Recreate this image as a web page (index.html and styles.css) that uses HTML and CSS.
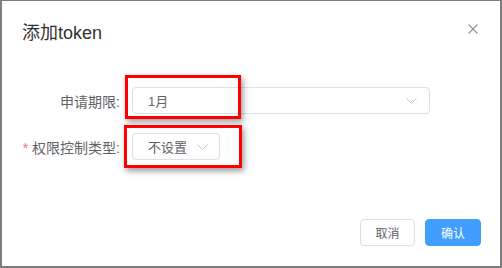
FILE: index.html
```html
<!DOCTYPE html>
<html lang="zh-CN">
<head>
<meta charset="utf-8">
<link rel="stylesheet" href="styles.css">
</head>
<body>
<div class="dialog">
  <div class="header">
    <span class="title">添加token</span>
    <button class="close" aria-label="close">
      <svg width="10" height="10" viewBox="0 0 10 10"><path d="M0.5 0.5L9.5 9.5M9.5 0.5L0.5 9.5" stroke="#909399" stroke-width="1.1" fill="none"/></svg>
    </button>
  </div>
  <div class="body">
    <div class="row">
      <label class="label">申请期限:</label>
      <div class="select wide">
        <span class="value">1月</span>
        <svg class="arrow" width="11" height="6" viewBox="0 0 11 6"><polyline points="0.5,0.5 5.5,5.5 10.5,0.5" stroke="#c0c4cc" stroke-width="1" fill="none"/></svg>
      </div>
    </div>
    <div class="row">
      <label class="label"><span class="req">*</span> 权限控制类型:</label>
      <div class="select narrow">
        <span class="value">不设置</span>
        <svg class="arrow" width="11" height="6" viewBox="0 0 11 6"><polyline points="0.5,0.5 5.5,5.5 10.5,0.5" stroke="#c0c4cc" stroke-width="1" fill="none"/></svg>
      </div>
    </div>
  </div>
  <div class="footer">
    <button class="btn">取消</button>
    <button class="btn primary">确认</button>
  </div>
</div>
<div class="mark mark1"></div>
<div class="mark mark2"></div>
</body>
</html>
```
FILE: styles.css
```css
html, body {
  margin: 0;
  padding: 0;
}
body {
  width: 502px;
  height: 268px;
  background: #7d7d7d;
  overflow: hidden;
  position: relative;
  font-family: "Helvetica Neue", Helvetica, "Liberation Sans", "Noto Sans CJK SC", sans-serif;
}
.dialog {
  margin: 1px 2px 2px 2px;
  height: 265px;
  background: #fff;
  display: flex;
  flex-direction: column;
  box-sizing: border-box;
}
.header {
  padding: 20px 20px 10px 20px;
  display: flex;
  align-items: center;
  justify-content: space-between;
}
.title {
  font-size: 18px;
  line-height: 24px;
  color: #303133;
}
.close {
  border: 0;
  background: none;
  padding: 0;
  margin: 0 2px 0 0;
  width: 10px;
  height: 10px;
  display: flex;
  margin-top: -8px;
}
.body {
  padding: 32px 20px 0 20px;
  display: flex;
  flex-direction: column;
  gap: 19px;
}
.row {
  display: flex;
  align-items: center;
  height: 27px;
}
.label {
  width: 110px;
  box-sizing: border-box;
  padding-right: 12px;
  text-align: right;
  font-size: 14px;
  color: #606266;
}
.req {
  color: #f56c6c;
}
.select {
  height: 27px;
  box-sizing: border-box;
  border: 1px solid #dcdfe6;
  border-radius: 4px;
  display: flex;
  align-items: center;
  justify-content: space-between;
  padding: 0 11px 0 15px;
}
.select.wide {
  width: 298px;
  padding-right: 12px;
}
.select.narrow {
  width: 88px;
}
.value {
  font-size: 13px;
  color: #606266;
}
.footer {
  margin-top: auto;
  padding: 0 19px 20px 20px;
  display: flex;
  justify-content: flex-end;
  gap: 10px;
}
.btn {
  height: 27px;
  width: 55px;
  border: 1px solid #dcdfe6;
  border-radius: 4px;
  background: #fff;
  color: #606266;
  font-size: 12px;
  font-family: inherit;
  padding: 0;
}
.btn.primary {
  width: 56px;
  background: #409eff;
  border-color: #409eff;
  color: #fff;
}
.mark {
  position: absolute;
  box-sizing: border-box;
  border: 3px solid #ff0000;
  box-shadow: 2px 3px 6px rgba(0, 0, 0, 0.4);
}
.mark1 {
  left: 125px;
  top: 75px;
  width: 116px;
  height: 44px;
}
.mark2 {
  left: 124px;
  top: 125px;
  width: 118px;
  height: 43px;
}
```
